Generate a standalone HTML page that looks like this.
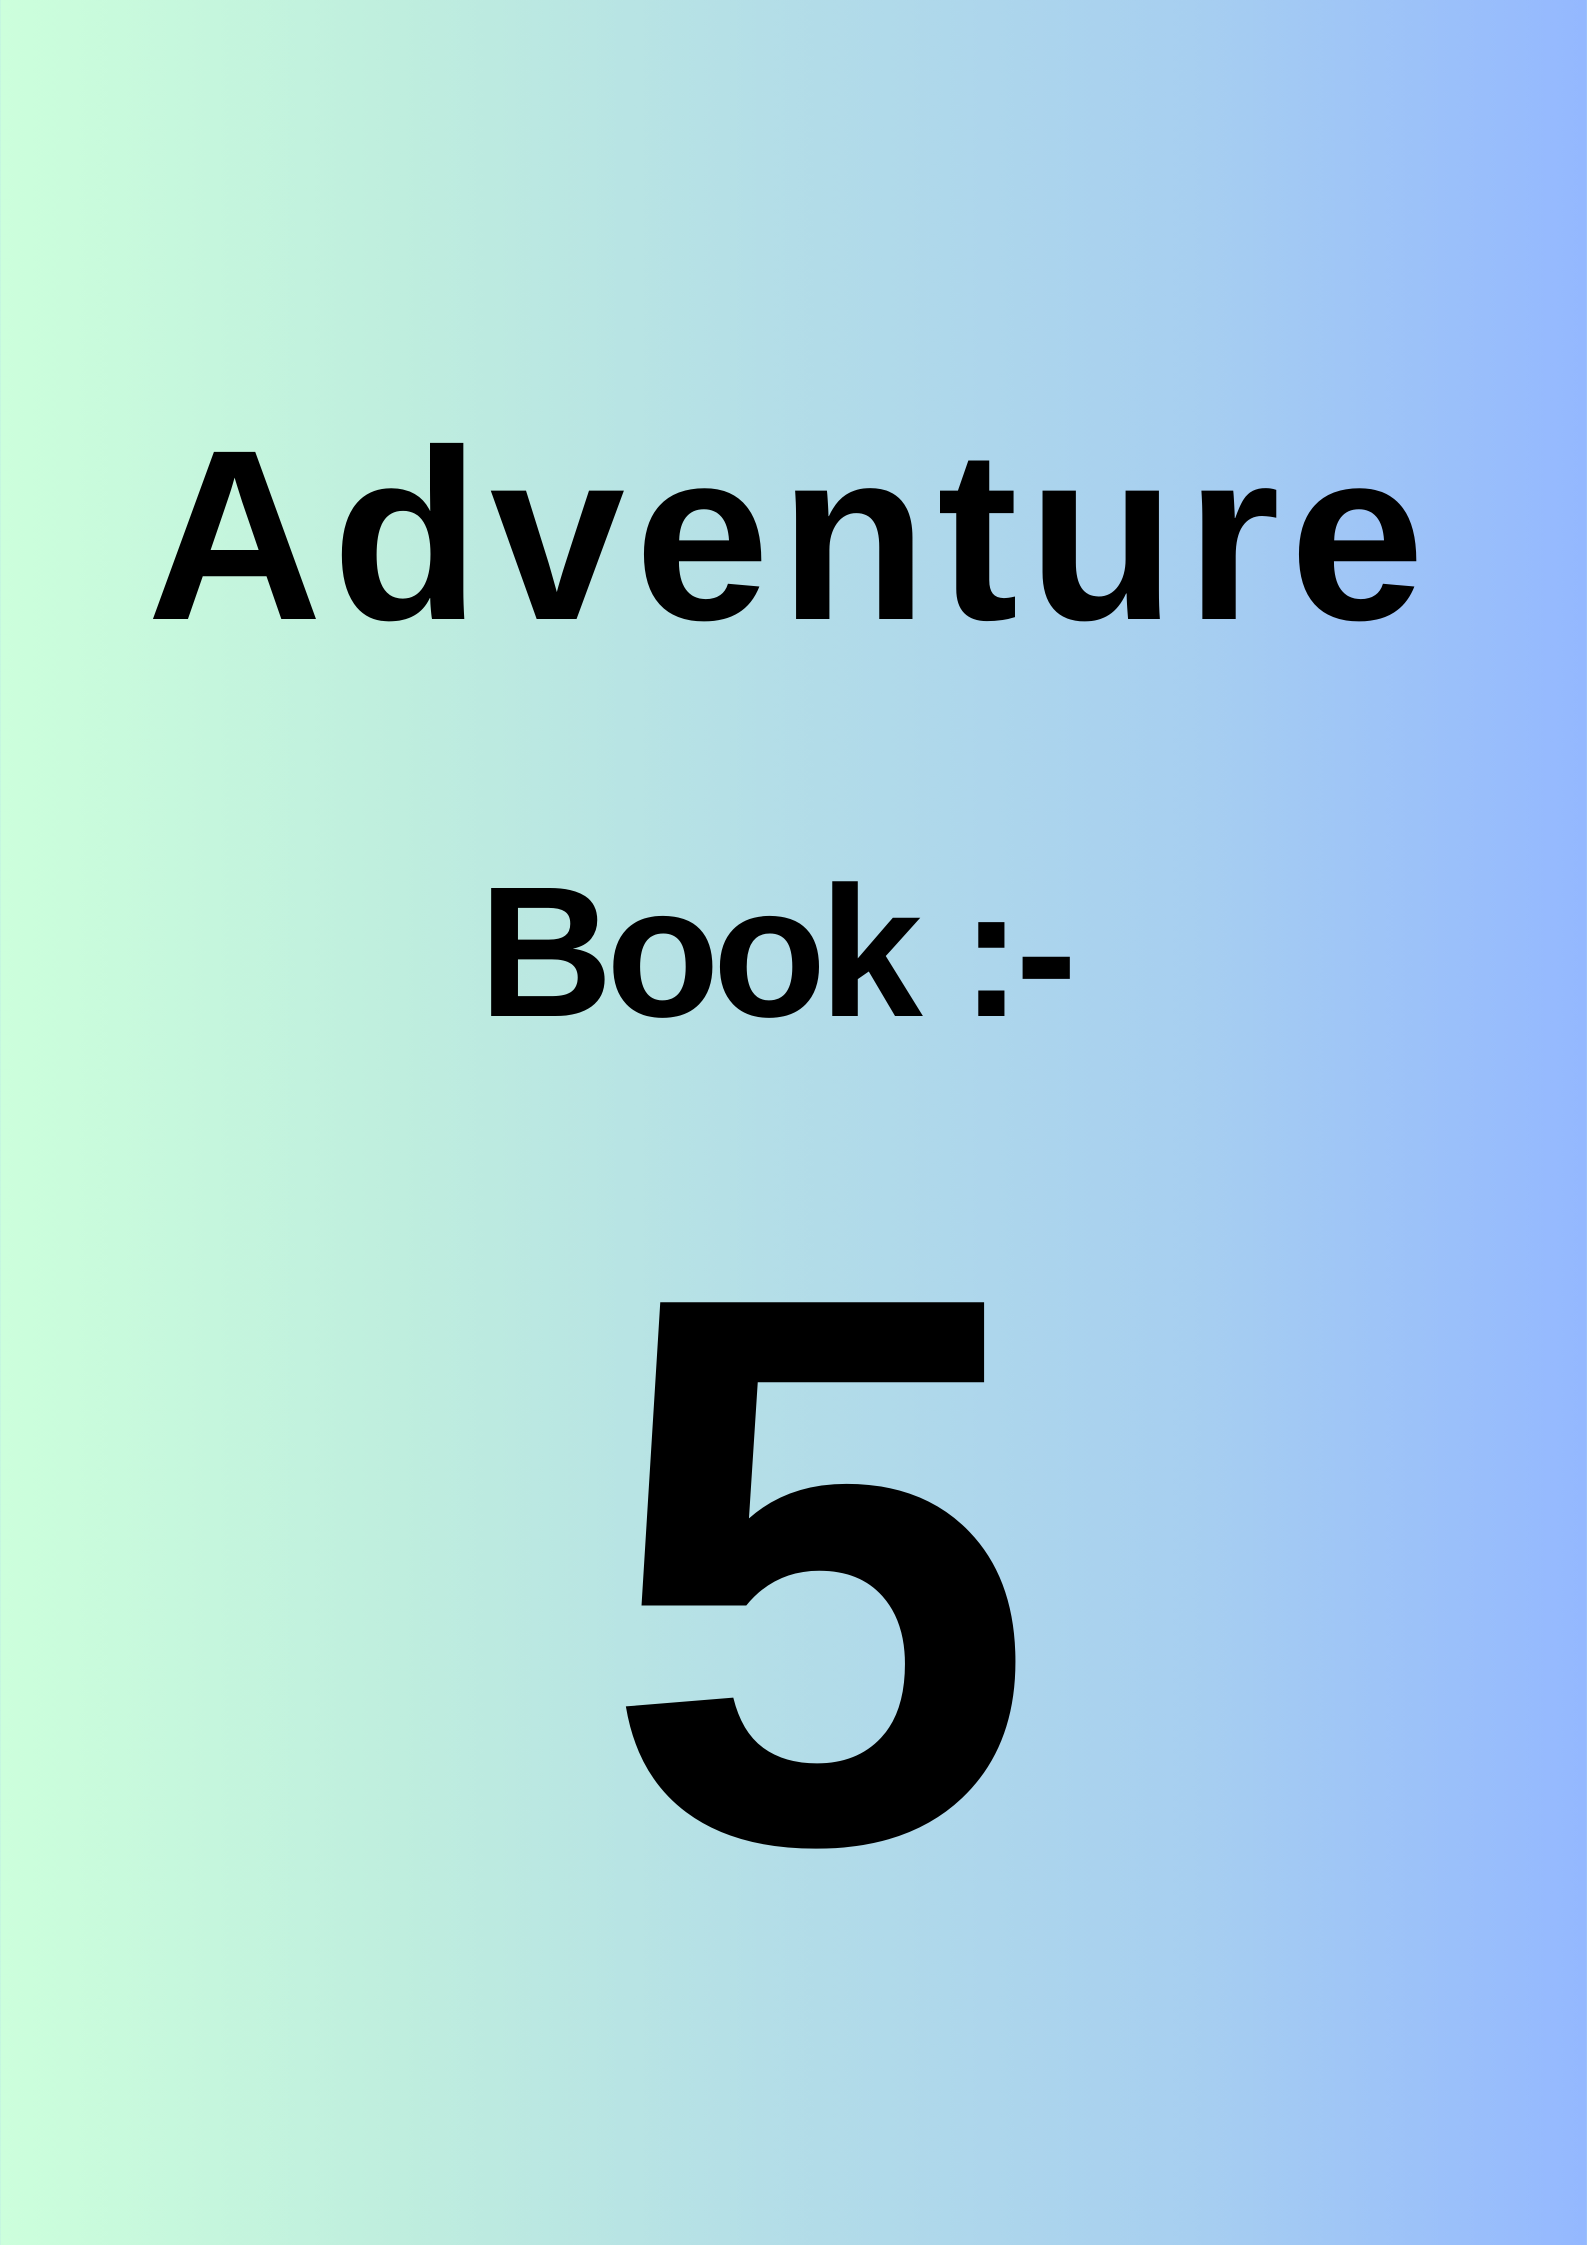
<!DOCTYPE html>
<html><head><meta charset="utf-8"><style>
html,body{margin:0;padding:0}
body{width:1587px;height:2245px;position:relative;overflow:hidden;
background:linear-gradient(90deg,#ccffdc 0%,#bfeede 25%,#b3dde8 50%,#a7cff0 75%,#94b8ff 100%);
font-family:"Liberation Sans",sans-serif;font-weight:bold;color:#000}
.t{position:absolute;left:0;width:1587px;text-align:center;white-space:nowrap;line-height:1}
</style></head><body>
<div class="t" style="top:414px;font-size:243px;letter-spacing:9.5px;left:-3px">Adventure</div>
<div class="t" style="top:860px;font-size:186px;letter-spacing:-7px;left:-19px">Book :-</div>
<div class="t" style="top:1178px;font-size:783px;left:26px">5</div>
</body></html>
